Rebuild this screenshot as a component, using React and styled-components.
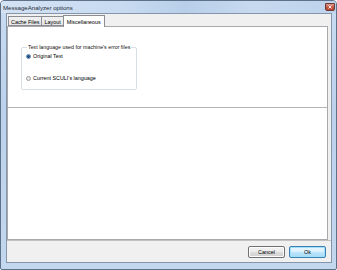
import React, { useState } from "react";
import styled, { createGlobalStyle } from "styled-components";

const Global = createGlobalStyle`
  html, body {
    margin: 0;
    padding: 0;
    background: #ffffff;
  }
  body {
    font-family: "Liberation Sans", Arial, sans-serif;
  }
`;

const Frame = styled.div`
  width: 337px;
  height: 270px;
  box-sizing: border-box;
  border: 1px solid #5f7189;
  border-radius: 4px 4px 2px 2px;
  background: linear-gradient(180deg, #c9dcf2 0%, #bcd2ec 40%, #c3d7ee 100%);
  display: flex;
  flex-direction: column;
  overflow: hidden;
`;

const TitleBar = styled.div`
  height: 11px;
  display: flex;
  align-items: center;
  justify-content: space-between;
  padding: 1px 1px 0 2px;
  background: linear-gradient(90deg, #d3e2f4 0%, #c8dbf1 35%, #b9cfe9 55%, #c6d9ef 75%, #bed3ec 100%);
`;

const Title = styled.span`
  font-size: 6.1px;
  color: #1e2b3a;
`;

const Close = styled.div`
  width: 10px;
  height: 8px;
  margin-top: -1px;
  border: 1px solid #6d3b35;
  border-radius: 0 0 2px 2px;
  box-sizing: border-box;
  background: linear-gradient(180deg, #e09a8c 0%, #c75a48 50%, #b8402f 100%);
  display: flex;
  align-items: center;
  justify-content: center;
`;

const Client = styled.div`
  flex: 1;
  margin: 0 4px 6px 5px;
  border: 1px solid #8596ab;
  background: #f0f0f0;
  display: flex;
  flex-direction: column;
`;

const TabStrip = styled.div`
  height: 12px;
  display: flex;
  align-items: flex-end;
  padding-left: 1px;
`;

const Tab = styled.div`
  height: ${(p) => (p.$active ? 12 : 10)}px;
  padding: 0 ${(p) => (p.$active ? 3 : 2)}px;
  box-sizing: border-box;
  border: 1px solid #8c8e94;
  border-bottom: ${(p) => (p.$active ? "none" : "1px solid #8c8e94")};
  margin-left: ${(p) => (p.$first ? 0 : -1)}px;
  margin-bottom: ${(p) => (p.$active ? -1 : 0)}px;
  background: ${(p) =>
    p.$active ? "#ffffff" : "linear-gradient(180deg, #f2f2f2 0%, #e6e6e6 100%)"};
  position: relative;
  z-index: ${(p) => (p.$active ? 2 : 1)};
  font-size: 5.4px;
  color: #000;
  display: flex;
  align-items: center;
  padding-top: ${(p) => (p.$active ? 0 : 1)}px;
`;

const Panel = styled.div`
  flex: 1;
  margin: 0 3px 0 0;
  border: 1px solid #a7a9ad;
  background: #ffffff;
  display: flex;
  flex-direction: column;
`;

const TabPage = styled.div`
  height: 81px;
  border-bottom: 1px solid #b4b4b4;
  padding: 17px 0 0 13px;
  box-sizing: border-box;
`;

const Group = styled.fieldset`
  width: 116px;
  height: 46px;
  box-sizing: border-box;
  margin: 0;
  padding: 3px 0 0 4px;
  border: 1px solid #d5dfe5;
  border-radius: 2px;
  display: flex;
  flex-direction: column;
  gap: 16px;
`;

const Legend = styled.legend`
  font-size: 5.3px;
  color: #111;
  padding: 0 1px;
  margin-left: 1px;
`;

const Option = styled.label`
  display: flex;
  align-items: center;
  gap: 2px;
  font-size: 5.4px;
  color: #000;
  height: 6px;
`;

const Radio = styled.span`
  width: 5px;
  height: 5px;
  box-sizing: border-box;
  border-radius: 50%;
  border: 1px solid ${(p) => (p.$checked ? "#5a7fa3" : "#9a9a9a")};
  background: ${(p) =>
    p.$checked
      ? "radial-gradient(circle, #1d4f86 0 1.2px, #6f9fd0 1.6px, #e6eef6 2px)"
      : "radial-gradient(circle, #e8e8e8 0 1.5px, #f6f6f6 2px)"};
`;

const Lower = styled.div`
  flex: 1;
  background: #ffffff;
`;

const Bottom = styled.div`
  height: 21px;
  border-top: 1px solid #c2c2c2;
  display: flex;
  align-items: center;
  justify-content: flex-end;
  gap: 4px;
  padding-right: 5px;
`;

const Button = styled.button`
  width: 37px;
  height: 12px;
  padding: 0;
  margin-top: 1px;
  font-family: inherit;
  font-size: 5.4px;
  color: #000;
  border-radius: 2px;
  border: 1px solid ${(p) => (p.$default ? "#3c7fb1" : "#707070")};
  background: ${(p) =>
    p.$default
      ? "linear-gradient(180deg, #eaf6fd 0%, #d9f0fc 50%, #bee6fd 51%, #a7d9f5 100%)"
      : "linear-gradient(180deg, #f2f2f2 0%, #ebebeb 50%, #dddddd 51%, #cfcfcf 100%)"};
  box-shadow: inset 0 0 0 1px ${(p) => (p.$default ? "#9fe0fb" : "#fcfcfc")};
`;

const tabs = ["Cache Files", "Layout", "Miscellaneous"];

export default function App() {
  const [active, setActive] = useState(2);
  const [lang, setLang] = useState("original");

  return (
    <>
      <Global />
      <Frame>
        <TitleBar>
          <Title>MessageAnalyzer options</Title>
          <Close>
            <svg width="4" height="4" viewBox="0 0 4 4">
              <path d="M0.5 0.5 L3.5 3.5 M3.5 0.5 L0.5 3.5" stroke="#fff" strokeWidth="0.9" />
            </svg>
          </Close>
        </TitleBar>
        <Client>
          <TabStrip>
            {tabs.map((t, i) => (
              <Tab key={t} $first={i === 0} $active={i === active} onClick={() => setActive(i)}>
                {t}
              </Tab>
            ))}
          </TabStrip>
          <Panel>
            <TabPage>
              <Group>
                <Legend>Text language used for machine's error files</Legend>
                <Option onClick={() => setLang("original")}>
                  <Radio $checked={lang === "original"} />
                  Original Text
                </Option>
                <Option onClick={() => setLang("current")}>
                  <Radio $checked={lang === "current"} />
                  Current SCULI's language
                </Option>
              </Group>
            </TabPage>
            <Lower />
          </Panel>
          <Bottom>
            <Button>Cancel</Button>
            <Button $default>Ok</Button>
          </Bottom>
        </Client>
      </Frame>
    </>
  );
}
